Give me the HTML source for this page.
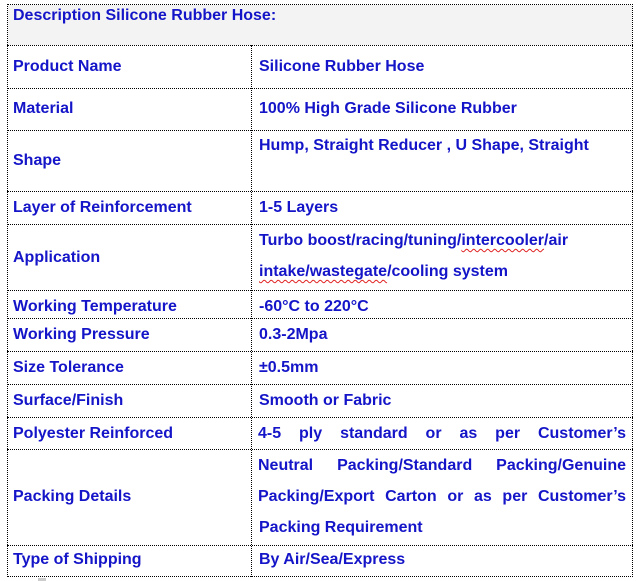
<!DOCTYPE html>
<html><head><meta charset="utf-8"><style>
*{margin:0;padding:0;box-sizing:border-box}
body{width:638px;height:581px;background:#fff;position:relative;overflow:hidden;font-family:"Liberation Sans",Arial,sans-serif;font-weight:bold;font-size:16px;color:#1414c8}
.h{position:absolute;left:7px;width:626px;border-top:1px dotted #000;height:0}
.v{position:absolute;width:0;border-left:1px dotted #000}
.t{position:absolute;white-space:nowrap;line-height:18px}
.j{position:absolute;left:258px;width:368px;text-align:justify;text-align-last:justify;line-height:18px;white-space:nowrap}
.sq{text-decoration:underline wavy #e02020;text-decoration-thickness:1px;text-underline-offset:3px}
</style></head><body>
<div style="position:absolute;left:8px;top:5px;width:624px;height:40px;background:#f3f3f3"></div>
<div class="h" style="top:4px"></div>
<div class="h" style="top:45px"></div>
<div class="h" style="top:88px"></div>
<div class="h" style="top:130px"></div>
<div class="h" style="top:191px"></div>
<div class="h" style="top:224px"></div>
<div class="h" style="top:290px"></div>
<div class="h" style="top:318px"></div>
<div class="h" style="top:351px"></div>
<div class="h" style="top:384px"></div>
<div class="h" style="top:417px"></div>
<div class="h" style="top:449px"></div>
<div class="h" style="top:545px"></div>
<div class="h" style="top:576px"></div>
<div class="v" style="left:7px;top:4px;height:573px"></div>
<div class="v" style="left:632px;top:4px;height:573px"></div>
<div class="v" style="left:251px;top:45px;height:532px"></div>

<div class="t" style="left:13px;top:7px">Description Silicone Rubber Hose:</div>
<div class="t" style="left:13px;top:58px">Product Name</div>
<div class="t" style="left:259px;top:58px">Silicone Rubber Hose</div>
<div class="t" style="left:13px;top:100px">Material</div>
<div class="t" style="left:259px;top:100px">100% High Grade Silicone Rubber</div>
<div class="t" style="left:13px;top:152px">Shape</div>
<div class="t" style="left:259px;top:137px">Hump, Straight Reducer , U Shape, Straight</div>
<div class="t" style="left:13px;top:199px">Layer of Reinforcement</div>
<div class="t" style="left:259px;top:199px">1-5 Layers</div>
<div class="t" style="left:13px;top:249px">Application</div>
<div class="t" style="left:259px;top:232px">Turbo boost/racing/tuning/<span class="sq">intercooler</span>/air</div>
<div class="t" style="left:259px;top:263px"><span class="sq">intake/wastegate</span>/cooling system</div>
<div class="t" style="left:13px;top:298px">Working Temperature</div>
<div class="t" style="left:259px;top:298px">-60°C to 220°C</div>
<div class="t" style="left:13px;top:326px">Working Pressure</div>
<div class="t" style="left:259px;top:326px">0.3-2Mpa</div>
<div class="t" style="left:13px;top:359px">Size Tolerance</div>
<div class="t" style="left:259px;top:359px">±0.5mm</div>
<div class="t" style="left:13px;top:392px">Surface/Finish</div>
<div class="t" style="left:259px;top:392px">Smooth or Fabric</div>
<div class="t" style="left:13px;top:425px">Polyester Reinforced</div>
<div class="j" style="top:425px">4-5 ply standard or as per Customer’s</div>
<div class="t" style="left:13px;top:488px">Packing Details</div>
<div class="j" style="top:457px">Neutral Packing/Standard Packing/Genuine</div>
<div class="j" style="top:488px">Packing/Export Carton or as per Customer’s</div>
<div class="t" style="left:259px;top:519px">Packing Requirement</div>
<div class="t" style="left:13px;top:551px">Type of Shipping</div>
<div class="t" style="left:259px;top:551px">By Air/Sea/Express</div>
<div style="position:absolute;left:38px;top:578px;width:8px;height:3px;background:#ccc"></div>
</body></html>
